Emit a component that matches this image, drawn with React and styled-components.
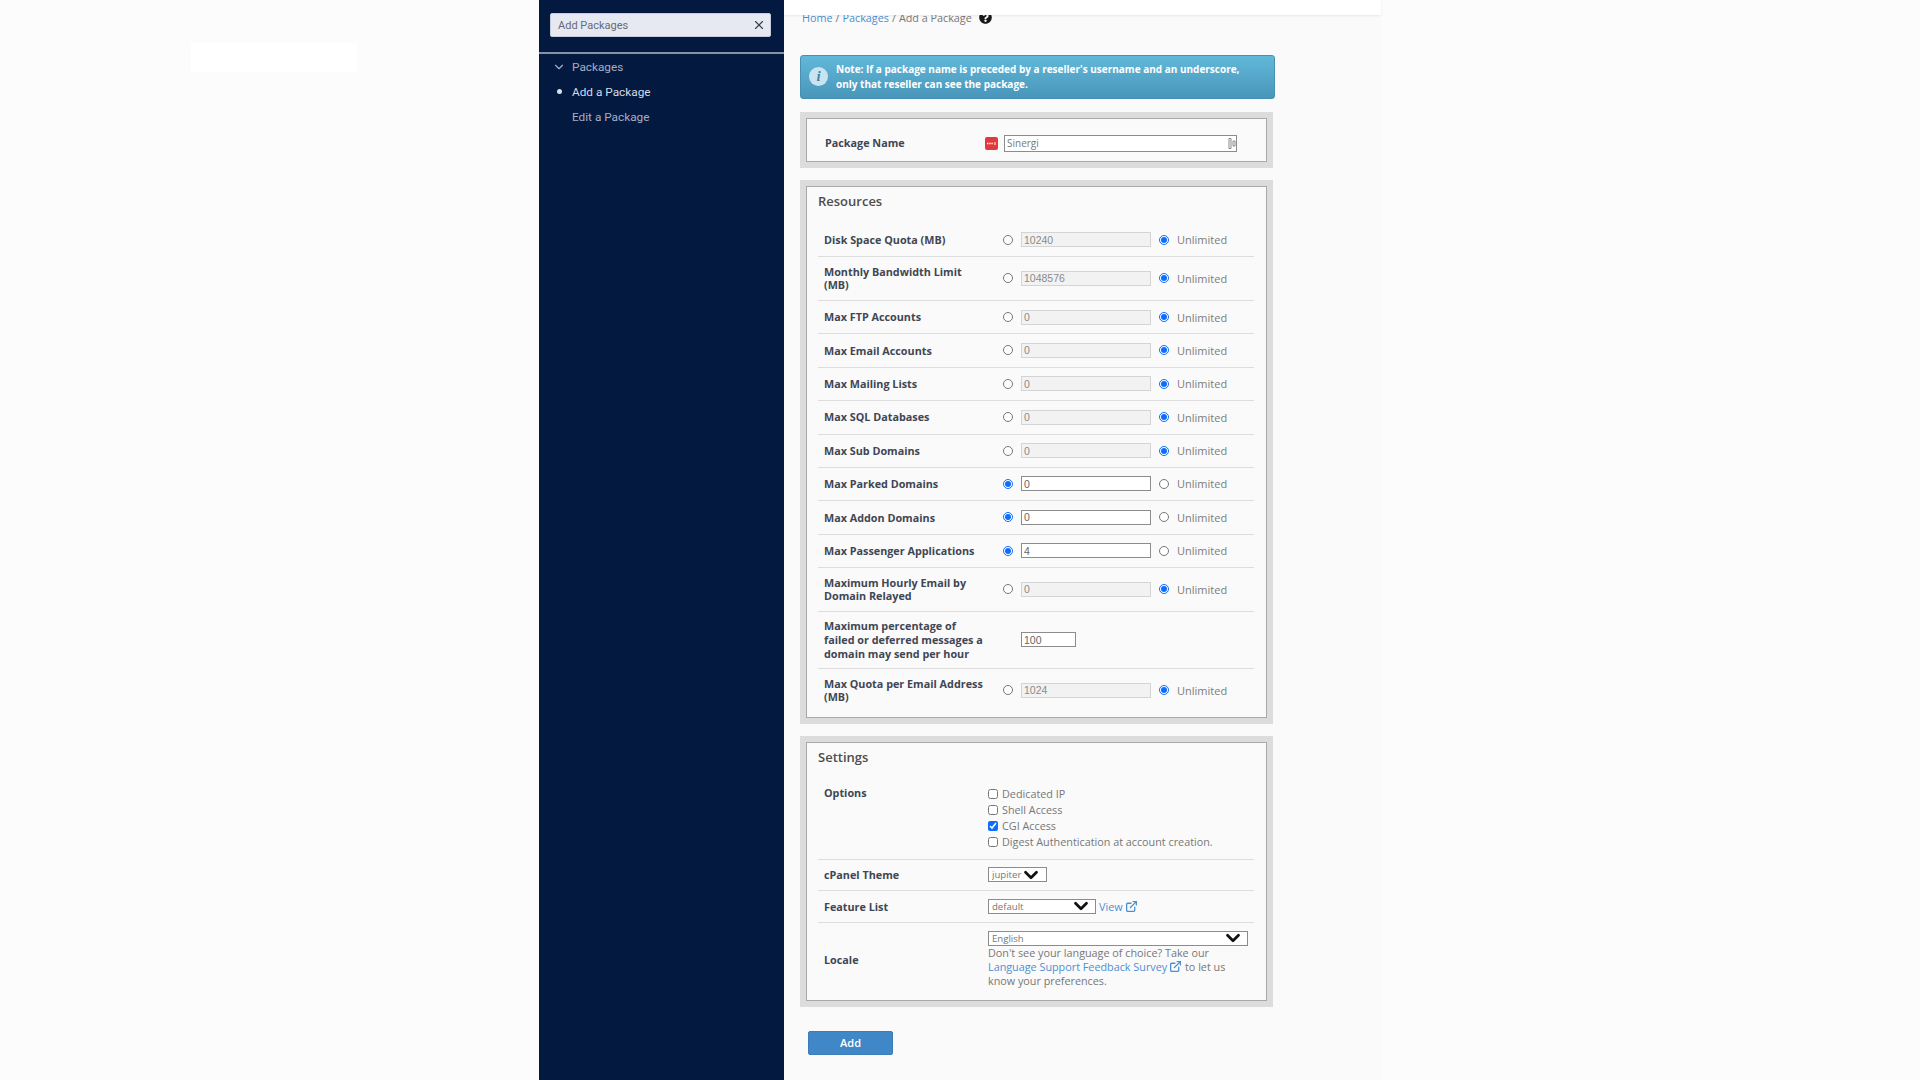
import React from "react";
import styled, { createGlobalStyle } from "styled-components";
import { ChevronDown, ExternalLink, X } from "lucide-react";
import { FaQuestionCircle } from "react-icons/fa";

const GlobalStyle = createGlobalStyle`
  html, body {
    margin: 0;
    padding: 0;
    background: #fcfcfc;
    font-family: "Open Sans", "Liberation Sans", sans-serif;
  }
  * {
    box-sizing: border-box;
  }
`;

const Page = styled.div`
  display: flex;
  width: 1920px;
  height: 1080px;
  overflow: hidden;
  background: #fcfcfc;
`;

const LeftMargin = styled.div`
  width: 539px;
  flex: none;
  padding: 43px 0 0 191px;
`;

const WhiteBlock = styled.div`
  width: 166px;
  height: 29px;
  background: #fff;
`;

const Sidebar = styled.aside`
  width: 245px;
  flex: none;
  background: #04193f;
  font-family: Roboto, "Liberation Sans", sans-serif;
  font-size: 11.8px;
`;

const SearchWrap = styled.div`
  height: 54px;
  padding: 13px 13px 0 11px;
  border-bottom: 2px solid #8791a6;
`;

const SearchBox = styled.div`
  display: flex;
  align-items: center;
  justify-content: space-between;
  height: 24px;
  padding: 0 4px 0 7px;
  background: #e6e9f2;
  border: 1px solid #c6cbda;
  border-radius: 2px;
  color: #666a75;
  font-size: 11px;
`;

const SideList = styled.nav`
  display: flex;
  flex-direction: column;
  padding: 1px 0 0 12px;
`;

const SideItem = styled.div`
  display: flex;
  align-items: center;
  height: ${(p) => p.$h}px;
  color: ${(p) => (p.$active ? "#d3dae8" : "#a3aec4")};
`;

const SideMark = styled.span`
  display: flex;
  align-items: center;
  justify-content: center;
  width: 16px;
  margin-right: 5px;
`;

const Bullet = styled.span`
  width: 5px;
  height: 5px;
  border-radius: 50%;
  background: #d9dfeb;
`;

const Content = styled.main`
  width: 597px;
  flex: none;
  background: #fafafa;
  font-size: 11.5px;
  color: #6b6b6b;
`;

const TopStrip = styled.div`
  position: relative;
  z-index: 1;
  height: 15px;
  background: #fff;
  box-shadow: 0 1px 2px rgba(0, 0, 0, 0.08);
`;

const Crumbs = styled.div`
  display: flex;
  align-items: center;
  gap: 3px;
  height: 14px;
  margin-top: -5px;
  padding-left: 18px;
  font-size: 10.8px;
  color: #777;
`;

const Link = styled.a`
  color: #4d8fd1;
`;

const HelpIcon = styled(FaQuestionCircle)`
  margin-left: 4px;
  color: #1a1a1a;
  font-size: 13px;
`;

const Note = styled.div`
  display: flex;
  align-items: center;
  gap: 8px;
  width: 475px;
  height: 44px;
  margin: 31px 0 13px 16px;
  padding: 0 8px 1px 8px;
  border: 1px solid #4790b1;
  border-radius: 3px;
  background: linear-gradient(#62b8da, #4896b9);
  color: #fff;
  font-size: 10px;
  font-weight: 700;
  line-height: 15px;
`;

const NoteIcon = styled.span`
  display: flex;
  align-items: center;
  justify-content: center;
  width: 19px;
  height: 19px;
  flex: none;
  border-radius: 50%;
  background: #c9e4f0;
  color: #3f87a8;
  font-family: "Liberation Serif", serif;
  font-size: 15px;
  font-style: italic;
  font-weight: 700;
`;

const Form = styled.form`
  display: flex;
  flex-direction: column;
  gap: 12px;
  width: 473px;
  margin-left: 16px;
`;

const Panel = styled.section`
  padding: 6px;
  background: #dcdcdc;
`;

const PanelInner = styled.div`
  padding: ${(p) => p.$pad || "0"};
  background: #fafafa;
  border: 1.5px solid #a9a9a9;
`;

const Heading = styled.h2`
  margin: 0;
  padding-left: 11px;
  color: #4d4d4d;
  font-size: 13px;
  font-weight: 600;
  line-height: 18px;
`;

const Rows = styled.div`
  display: flex;
  flex-direction: column;
  margin: ${(p) => p.$margin};
`;

const Row = styled.div`
  display: grid;
  grid-template-columns: 170px 1fr;
  align-items: ${(p) => p.$align || "center"};
  min-height: ${(p) => p.$min || 33.4}px;
  padding: ${(p) => p.$pad || "7.5px 0 8px"};
  border-bottom: ${(p) => (p.$last ? "none" : "1.5px solid #dedede")};
`;

const Label = styled.label`
  padding-left: ${(p) => p.$indent ?? 6}px;
  color: #3f4654;
  font-size: 10.8px;
  font-weight: 700;
  line-height: 13.6px;
`;

const Values = styled.div`
  display: flex;
  align-items: center;
  min-height: 16px;
  padding-left: ${(p) => p.$pad ?? 15}px;
`;

const Radio = styled.input.attrs({ type: "radio" })`
  width: 10px;
  height: 10px;
  margin: 0 8px 0 0;
  flex: none;
  accent-color: #0d6efd;
`;

const NumberInput = styled.input`
  width: ${(p) => p.$w || 130}px;
  height: 15px;
  margin: 0 8px 0 0;
  padding: 0 2px;
  flex: none;
  background: ${(p) => (p.disabled ? "#f2f2f2" : "#fff")};
  border: 1.5px solid ${(p) => (p.disabled ? "#d4d4d4" : "#8c8c8c")};
  color: ${(p) => (p.disabled ? "#8a8a8a" : "#666")};
  font-family: "Liberation Sans", sans-serif;
  font-size: 10.5px;
  outline: none;
`;

const UnlimitedText = styled.span`
  color: #7c7c7c;
  font-size: 11px;
`;

const PackageRow = styled.div`
  display: grid;
  grid-template-columns: 160px 1fr;
  align-items: center;
  height: 42px;
  padding: 6px 0 0 18px;
`;

const NameField = styled.div`
  position: relative;
  display: flex;
  align-items: center;
  gap: 6px;
`;

const NameInput = styled.input`
  width: 233px;
  height: 17px;
  padding: 0 2px;
  background: #fff;
  border: 1.5px solid #8c8c8c;
  color: #777;
  font-family: "Open Sans", sans-serif;
  font-size: 10px;
  outline: none;
`;

const ManagerIcon = styled.svg`
  position: absolute;
  top: 3px;
  right: 30px;
`;

const CheckList = styled.div`
  display: flex;
  flex-direction: column;
`;

const CheckRow = styled.label`
  display: flex;
  align-items: center;
  gap: 4px;
  height: 16px;
  color: #777;
  font-size: 10.8px;
  white-space: nowrap;
`;

const Check = styled.input.attrs({ type: "checkbox" })`
  width: 10px;
  height: 10px;
  margin: 0;
  accent-color: #0d6efd;
`;

const SelectWrap = styled.div`
  position: relative;
  width: ${(p) => p.$w}px;
  height: 15px;
  flex: none;
`;

const Select = styled.select`
  display: block;
  width: 100%;
  height: 100%;
  padding: 0 0 0 3px;
  appearance: none;
  background: #fff;
  border: 1.5px solid #8c8c8c;
  border-radius: 0;
  color: #777;
  font-family: "Open Sans", sans-serif;
  font-size: 9.6px;
  outline: none;
`;

const SelectArrow = styled(ChevronDown)`
  position: absolute;
  top: -3.5px;
  right: ${(p) => p.$right}px;
  color: #111;
  pointer-events: none;
`;

const BlueLink = styled(Link)`
  display: inline-flex;
  align-items: center;
  gap: 2px;
  font-size: 10.8px;
`;

const ViewLink = styled(BlueLink)`
  margin-left: 3px;
`;

const LocaleCol = styled.div`
  display: flex;
  flex-direction: column;
  width: 260px;
`;

const LocaleHelp = styled.div`
  color: #777;
  font-size: 10.8px;
  line-height: 14px;
`;

const ButtonRow = styled.div`
  padding: 24px 0 0 24px;
`;

const AddButton = styled.button`
  width: 85px;
  height: 24px;
  background: #3f87c6;
  border: 1px solid #3a7db8;
  border-radius: 2px;
  color: #fff;
  font-family: "Open Sans", sans-serif;
  font-size: 11px;
  font-weight: 600;
`;

const resources = [
  { label: "Disk Space Quota (MB)", value: "10240", unlimited: true },
  { label: "Monthly Bandwidth Limit (MB)", value: "1048576", unlimited: true },
  { label: "Max FTP Accounts", value: "0", unlimited: true },
  { label: "Max Email Accounts", value: "0", unlimited: true },
  { label: "Max Mailing Lists", value: "0", unlimited: true },
  { label: "Max SQL Databases", value: "0", unlimited: true },
  { label: "Max Sub Domains", value: "0", unlimited: true },
  { label: "Max Parked Domains", value: "0", unlimited: false },
  { label: "Max Addon Domains", value: "0", unlimited: false },
  { label: "Max Passenger Applications", value: "4", unlimited: false },
  { label: "Maximum Hourly Email by Domain Relayed", value: "0", unlimited: true },
  { label: "Maximum percentage of failed or deferred messages a domain may send per hour", value: "100", plain: true },
  { label: "Max Quota per Email Address (MB)", value: "1024", unlimited: true, last: true },
];

const options = [
  { label: "Dedicated IP", checked: false },
  { label: "Shell Access", checked: false },
  { label: "CGI Access", checked: true },
  { label: "Digest Authentication at account creation.", checked: false },
];

function ResourceRow({ row, id }) {
  if (row.plain) {
    return (
      <Row>
        <Label>{row.label}</Label>
        <Values $pad={33}>
          <NumberInput $w={55} defaultValue={row.value} />
        </Values>
      </Row>
    );
  }
  return (
    <Row $last={row.last}>
      <Label>{row.label}</Label>
      <Values>
        <Radio name={id} defaultChecked={!row.unlimited} />
        <NumberInput defaultValue={row.value} disabled={row.unlimited} />
        <Radio name={id} defaultChecked={row.unlimited} />
        <UnlimitedText>Unlimited</UnlimitedText>
      </Values>
    </Row>
  );
}

export default function App() {
  return (
    <>
      <GlobalStyle />
      <Page>
        <LeftMargin>
          <WhiteBlock />
        </LeftMargin>
        <Sidebar>
          <SearchWrap>
            <SearchBox>
              Add Packages
              <X size={14} color="#3a4356" strokeWidth={2} />
            </SearchBox>
          </SearchWrap>
          <SideList>
            <SideItem $h={24}>
              <SideMark>
                <ChevronDown size={14} color="#a3aec4" />
              </SideMark>
              Packages
            </SideItem>
            <SideItem $h={25} $active>
              <SideMark>
                <Bullet />
              </SideMark>
              Add a Package
            </SideItem>
            <SideItem $h={26}>
              <SideMark />
              Edit a Package
            </SideItem>
          </SideList>
        </Sidebar>
        <Content>
          <TopStrip />
          <Crumbs>
            <Link>Home</Link>/<Link>Packages</Link>/<span>Add a Package</span>
            <HelpIcon />
          </Crumbs>
          <Note>
            <NoteIcon>i</NoteIcon>
            <span>
              Note: If a package name is preceded by a reseller's username and an underscore,
              <br />
              only that reseller can see the package.
            </span>
          </Note>
          <Form>
            <Panel>
              <PanelInner>
                <PackageRow>
                  <Label as="span" $indent={0}>Package Name</Label>
                  <NameField>
                    <svg width="13" height="13" viewBox="0 0 13 13">
                      <rect width="13" height="13" rx="2" fill="#e03a3a" />
                      <path d="M2 6.5h6" stroke="#fff" strokeWidth="1.4" strokeDasharray="1.4 .8" />
                      <path d="M10 5v3" stroke="#fff" strokeWidth="1" />
                    </svg>
                    <NameInput defaultValue="Sinergi" />
                    <ManagerIcon width="8" height="11" viewBox="0 0 8 11">
                      <path d="M1 .5h2v10H1zM5 3h2v5H5z" fill="none" stroke="#8a8a8a" strokeWidth="1" />
                    </ManagerIcon>
                  </NameField>
                </PackageRow>
              </PanelInner>
            </Panel>
            <Panel>
              <PanelInner $pad="5px 0 5px">
                <Heading>Resources</Heading>
                <Rows $margin="14px 12px 0 11px">
                  {resources.map((row, i) => (
                    <ResourceRow key={row.label} row={row} id={`res-${i}`} />
                  ))}
                </Rows>
              </PanelInner>
            </Panel>
            <Panel>
              <PanelInner $pad="5px 0 0">
                <Heading>Settings</Heading>
                <Rows $margin="18px 12px 0 11px">
                  <Row $align="start" $pad="2px 0 9px">
                    <Label>Options</Label>
                    <CheckList>
                      {options.map((o) => (
                        <CheckRow key={o.label}>
                          <Check defaultChecked={o.checked} />
                          {o.label}
                        </CheckRow>
                      ))}
                    </CheckList>
                  </Row>
                  <Row $min={31} $pad="7px 0">
                    <Label>cPanel Theme</Label>
                    <SelectWrap $w={59}>
                      <Select defaultValue="jupiter">
                        <option>jupiter</option>
                      </Select>
                      <SelectArrow size={22} strokeWidth={3} $right={5} />
                    </SelectWrap>
                  </Row>
                  <Row $min={32} $pad="7px 0">
                    <Label>Feature List</Label>
                    <Values $pad={0}>
                      <SelectWrap $w={108}>
                        <Select defaultValue="default">
                          <option>default</option>
                        </Select>
                        <SelectArrow size={22} strokeWidth={3} $right={4} />
                      </SelectWrap>
                      <ViewLink>
                        View <ExternalLink size={13} strokeWidth={2.4} />
                      </ViewLink>
                    </Values>
                  </Row>
                  <Row $last $pad="8px 0 12px">
                    <Label>Locale</Label>
                    <LocaleCol>
                      <SelectWrap $w={260}>
                        <Select defaultValue="English">
                          <option>English</option>
                        </Select>
                        <SelectArrow size={22} strokeWidth={3} $right={4} />
                      </SelectWrap>
                      <LocaleHelp>
                        Don't see your language of choice? Take our{" "}
                        <BlueLink>
                          Language Support Feedback Survey <ExternalLink size={13} strokeWidth={2.4} />
                        </BlueLink>{" "}
                        to let us know your preferences.
                      </LocaleHelp>
                    </LocaleCol>
                  </Row>
                </Rows>
              </PanelInner>
            </Panel>
          </Form>
          <ButtonRow>
            <AddButton type="button">Add</AddButton>
          </ButtonRow>
        </Content>
      </Page>
    </>
  );
}
